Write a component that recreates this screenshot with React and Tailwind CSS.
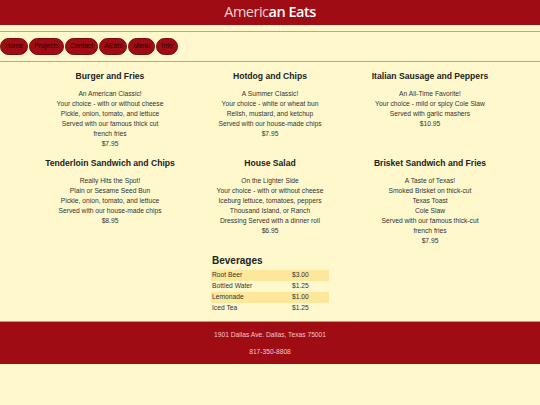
import React from "react";

const items = [
  [
    { t: "Burger and Fries", l: ["An American Classic!", "Your choice - with or without cheese", "Pickle, onion, tomato, and lettuce", "Served with our famous thick cut", "french fries", "$7.95"] },
    { t: "Hotdog and Chips", l: ["A Summer Classic!", "Your choice - white or wheat bun", "Relish, mustard, and ketchup", "Served with our house-made chips", "$7.95"] },
    { t: "Italian Sausage and Peppers", l: ["An All-Time Favorite!", "Your choice - mild or spicy Cole Slaw", "Served with garlic mashers", "$10.95"] },
  ],
  [
    { t: "Tenderloin Sandwich and Chips", l: ["Really Hits the Spot!", "Plain or Sesame Seed Bun", "Pickle, onion, tomato, and lettuce", "Served with our house-made chips", "$8.95"] },
    { t: "House Salad", l: ["On the Lighter Side", "Your choice - with or without cheese", "Iceburg lettuce, tomatoes, peppers", "Thousand Island, or Ranch", "Dressing Served with a dinner roll", "$6.95"] },
    { t: "Brisket Sandwich and Fries", l: ["A Taste of Texas!", "Smoked Brisket on thick-cut", "Texas Toast", "Cole Slaw", "Served with our famous thick-cut", "french fries", "$7.95"] },
  ],
];

const bev = [
  ["Root Beer", "$3.00", true],
  ["Bottled Water", "$1.25", false],
  ["Lemonade", "$1.00", true],
  ["Iced Tea", "$1.25", false],
];

const nav = ["Home", "Projects", "Contact", "AEats", "Menu", "Info"];

export default function App() {
  return (
    <div className="min-h-[405px] bg-[#fff8cc] font-['Liberation_Sans',Arial,sans-serif]">
      <header className="h-[25px] bg-[#a00c14] flex items-center justify-center">
        <h1 className="font-['Open_Sans',sans-serif] font-normal text-[14.5px] leading-none text-[#f6d2d2] tracking-[-0.5px] pb-[1px]">
          Americ<span className="font-semibold text-white">an Eats</span>
        </h1>
      </header>
      <nav className="mt-[6px] border-y border-[#caa27c] py-[6px] flex gap-[1px]">
        {nav.map((n) => (
          <span
            key={n}
            className="h-[17px] px-[4px] rounded-full bg-[#a00c14] border border-[#7a0a0e] text-[#2a0000] text-[6.8px] flex items-center"
          >
            {n}
          </span>
        ))}
      </nav>
      <main className="pt-[8px]">
        <div className="w-[480px] mx-auto flex flex-col gap-[8px]">
          {items.map((row, ri) => (
            <div key={ri} className="grid grid-cols-3">
              {row.map((it) => (
                <div key={it.t} className="text-center">
                  <h3 className="font-bold text-[8.6px] leading-[12px] text-[#222]">{it.t}</h3>
                  <div className="mt-[7px] text-[6.7px] leading-[10px] text-[#333]">
                    {it.l.map((x, i) => (
                      <p key={i}>{x}</p>
                    ))}
                  </div>
                </div>
              ))}
            </div>
          ))}
        </div>
        <div className="w-[118px] mx-auto mt-[9px]">
          <h2 className="font-bold text-[10px] leading-[12px] text-[#222] pl-[1px]">Beverages</h2>
          <div className="mt-[3px] text-[6.7px] text-[#333]">
            {bev.map(([n, p, h]) => (
              <div key={n} className={h ? "flex h-[11px] items-center bg-[#fce79a]" : "flex h-[11px] items-center"}>
                <span className="w-[81px] pl-[1px]">{n}</span>
                <span>{p}</span>
              </div>
            ))}
          </div>
        </div>
      </main>
      <footer className="mt-[7px] border-t border-[#d98c7c] bg-[#a00c14] h-[43px] flex flex-col items-center justify-center gap-[7px] text-[6.7px] leading-[10px] text-[#f3c6c6]">
        <p>1901 Dallas Ave. Dallas, Texas 75001</p>
        <p>817-350-8808</p>
      </footer>
    </div>
  );
}
